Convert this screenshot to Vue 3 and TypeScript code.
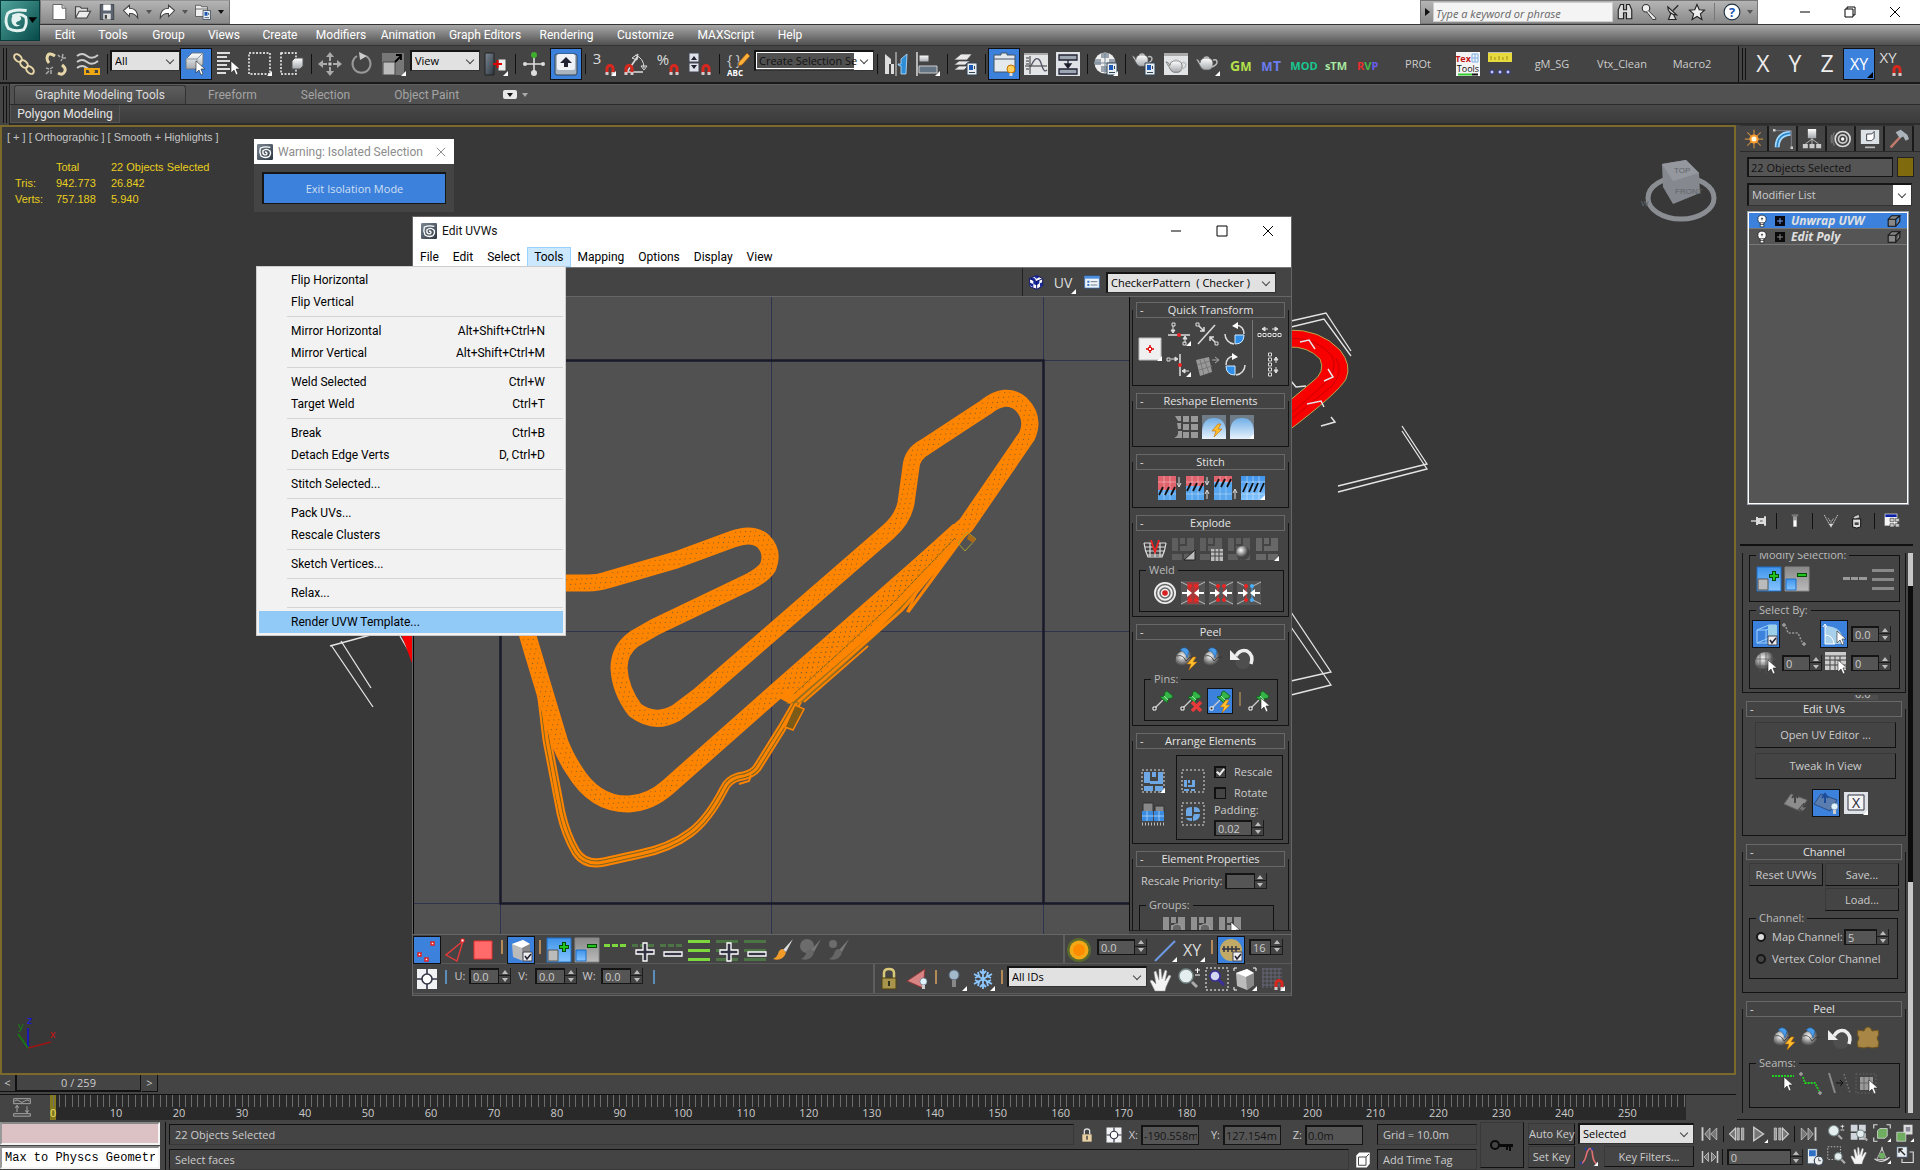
<script setup lang="ts">
import { h, ref } from 'vue'

/* ---------- icon fragments shared by several glyphs ---------- */
const fly = '<path d="M24 19v5h-5z" fill="#fff"/>'
const cursor = (x: number, y: number): string =>
  `<path transform="translate(${x} ${y})" d="M0 0v12l3-3 2 5 2-1-2-5h4z" fill="#fff" stroke="#222" stroke-width=".6"/>`
const magnet = (x: number, y: number): string =>
  `<g transform="translate(${x} ${y})"><path d="M2 11V5.500a3 3 0 0 1 6 0V11" fill="none" stroke="#d8281e" stroke-width="3"/><path d="M.5 9h3v3h-3zM6.500 9h3v3h-3z" fill="#ccc"/></g>`
const sheet = (x: number, y: number): string =>
  `<g transform="translate(${x} ${y})"><path d="M0 0h10v12H0z" fill="#e8edf2" stroke="#345"/><path d="M2 2h4v5H2z" fill="#1b57b4"/><path d="M2 9.500h6M7.500 3v3" stroke="#345"/></g>`
const tick = (x: number, y: number): string =>
  `<path d="M${x} ${y}h9v9h-9z" fill="#eee" stroke="#445"/><path d="M${x + 2} ${y + 4}l2 3 4-5" fill="none" stroke="#223" stroke-width="1.600"/>`
const bolt = (x: number, y: number): string =>
  `<path transform="translate(${x} ${y})" d="M6 0 0 7h4l-2 6 8-8H6l3-5z" fill="#ffbf2e" stroke="#c06a00" stroke-width=".6"/>`
const pot = (x: number, y: number, s: number): string =>
  `<g transform="translate(${x} ${y}) scale(${s})"><path d="M0 3q3 0 4 4 0-4 4-5h5q4 1 4 5 0 6-4 7H8Q5 13 3 8z" fill="url(#g-light)" stroke="#555" stroke-width=".7"/><path d="M17 4q4-1 4 2t-5 5M8 2q2.500-2 5 0" fill="none" stroke="#bbb" stroke-width="1.500"/></g>`
const bulbMini = (x: number, y: number): string =>
  `<g transform="translate(${x} ${y})"><circle cx="3.500" cy="3.500" r="3.500" fill="#dff4ff" stroke="#567" stroke-width=".6"/><path d="M2 7h3v4H2z" fill="#ccc"/></g>`
const pin = '<path d="m4 19 8-8" stroke="#ccc" stroke-width="1.300"/><path d="M2 18h3v3H2z" fill="#222" stroke="#fff"/><path d="m9 8 4-1 1-4 2-1 6 5-1 2-4 1-1 4z" fill="#35b548" stroke="#14651f"/><path d="m13 7 4 4" stroke="#9be8a4"/>'
const ball = '<circle cx="11" cy="14" r="9.500" fill="url(#g-ball)"/><path d="M3 10q6-2 9 5 3-5 8-4" fill="none" stroke="#333" stroke-width=".8"/><path d="M6 4q5-5 9 1l-2 7q-1-6-7-8z" fill="#4a9be8" stroke="#1d5ea8" stroke-width=".6"/>'
const letters = (t: string, x: number, y: number, size: number, fill: string, weight = 400): string =>
  `<text x="${x}" y="${y}" font-family="Open Sans, sans-serif" font-size="${size}" font-weight="${weight}" text-anchor="middle" fill="${fill}">${t}</text>`
const blocks = (c: string): string =>
  `<path d="M1 1h6v13H1zM9 1h5v6H9zM16 1h7v13H9V9h7zM1 17h10v6H1zM13 17h10v6H13z" fill="${c}"/>`
const swirl = '<rect width="24" height="24" rx="2" fill="url(#g-steel)"/><path d="M20 5Q12 3 5 6 3 12 6 18q6 4 12 1 4-5 1-9-5-4-10 0-1 5 2 6 4 1 4-2 0-2-3-2" fill="none" stroke="#fff" stroke-width="2"/>'
const cubeShape = '<path d="M3 6 14 2l7 4v12l-7 5L4 19z" fill="#bbb"/><path d="M3 6 14 2l7 4-8 4z" fill="#fff"/><path d="m13 10 8-4v12l-7 5z" fill="#888"/>'
const weldArms = '<path d="M0 0h24v24H0z" fill="#555"/><path d="m0 1 8 4M24 1l-8 4M0 23l8-4M24 23l-8-4" stroke="#bbb"/>'
const weldArrows = '<path d="M1 12h6M23 12h-6" stroke="#fff" stroke-width="2"/><path d="m6 8 5 4-5 4zM18 8l-5 4 5 4z" fill="#fff"/>'
const nodes = (c: string, x: number): string => `<path d="M${x} 5v14" stroke="${c}"/><circle cx="${x}" cy="5" r="2" fill="${c}"/><circle cx="${x}" cy="19" r="2" fill="${c}"/>`
const stitchArt = (split: number): string =>
  `<path d="M1 0h18v${split}H1z" fill="#e0626c"/><path d="M1 ${split}h18V24H1z" fill="#58a6ee"/><path d="M7 0v24M13 0v24M1 6h18M1 18h18" stroke="#fff" stroke-opacity=".35"/><path d="m2 ${split + 5} 4-8M8 ${split + 5}l4-8M14 ${split + 5}l4-8" stroke="#111" stroke-width="1.800"/>`
const bars = (c: string): string => `<path d="M1 2h22v3H1zM1 11h22v3H1zM1 20h22v3H1z" fill="${c}"/>`
const dashes = (c: string): string => `<path d="M1 6h6v3H1zM9 6h6v3H9zM17 6h6v3h-6z" fill="${c}"/>`
const plusOut = '<path d="M12 5h4v7h7v4h-7v7h-4v-7H5v-4h7z" fill="#334" stroke="#fff" stroke-width="1.300"/>'
const minusOut = '<path d="M5 14h18v4H5z" fill="#334" stroke="#fff" stroke-width="1.300"/>'
const brushArt = (h1: string, h2: string): string => `<path d="M22 1 12 12l3 2z" fill="${h1}"/><path d="M12 11q-4 0-5 5-1 3-5 5 9 3 13-6z" fill="${h2}"/>`
const chainRing = (x: number, y: number): string => `<ellipse cx="${x}" cy="${y}" rx="3" ry="4.500" transform="rotate(-45 ${x} ${y})" fill="none" stroke="#e6d6a8" stroke-width="2"/>`
const lens = (x: number, y: number, r: number): string =>
  `<path d="m${x + r - 1} ${y + r - 1} 5 5" stroke="#aaa" stroke-width="3"/><circle cx="${x}" cy="${y}" r="${r}" fill="#e4eeee" stroke="#788" stroke-width="1.400"/>`
const hand = '<path d="M6 24 1 14l2-1 4 4L5 5l2-1 3 9V2h2l1 10 3-9 2 1-2 10 4-6 2 1-5 11-1 4z" fill="#f4f4f4" stroke="#999" stroke-width=".5"/>'
const targetGrid = '<path d="M2 2h20v20H2z" fill="#f0f2f4"/><path d="M12 2v20M2 12h20" stroke="#334" stroke-width="1.600"/><circle cx="12" cy="12" r="5" fill="#fff" stroke="#334" stroke-width="1.600"/>'
const selPlus = '<path d="M0 0h24v24H0z" fill="url(#g-blue)" stroke="#1f6fc4"/><path d="M1 12h10v11H1z" fill="#bbb" stroke="#555"/><path d="M17 4v10M12 9h10" stroke="#054a05" stroke-width="4"/><path d="M17 5v8M13 9h8" stroke="#1fc41f" stroke-width="2"/>'
const selMinus = '<path d="M0 0h24v24H0z" fill="url(#g-gray)" stroke="#888"/><path d="M1 12h10v11H1z" fill="url(#g-blue)" stroke="#1f6fc4"/><path d="M12 8h10" stroke="#054a05" stroke-width="4"/><path d="M13 8h8" stroke="#1fc41f" stroke-width="2"/>'

const icons: Record<string, string> = {
  swirl,
  newdoc: '<path d="M4 2h12l5 5v15H4z" fill="#fff" stroke="#444"/><path d="M16 2v5h5" fill="#ccc" stroke="#444"/>',
  open: '<path d="M2 20V5h6l2 2h8v4" fill="#ddd" stroke="#444" stroke-width="1.500"/><path d="m2 20 5-9h15l-5 9z" fill="#eee" stroke="#444" stroke-width="1.500"/>',
  save: '<path d="M3 2h18v20H3z" fill="#5b6470" stroke="#333"/><path d="M7 2h10v8H7z" fill="#fff"/><path d="M7 14h10v8H7z" fill="#ddd"/><path d="M9 16h3v5H9z" fill="#444"/>',
  undo: '<path d="m2 10 8-7v4q11 0 11 13-4-7-11-6v4z" fill="#fff" stroke="#444" stroke-width="1.400"/>',
  redo: '<path d="m22 10-8-7v4Q3 7 3 20q4-7 11-6v4z" fill="#fff" stroke="#444" stroke-width="1.400"/>',
  project: '<path d="M2 3h7l1 2h8v13H2z" fill="#eee" stroke="#444"/><path d="M2 8h16" stroke="#444"/>' + sheet(12, 10),
  link: chainRing(6, 6) + chainRing(12, 12) + chainRing(18, 18),
  unlink: '<path d="M11 4Q4-1 3 6q0 3 2 5M14 21q5 3 7-2 1-3-3-6" fill="none" stroke="#e6d6a8" stroke-width="3"/><path d="M14 3l2 2m3-3-1 4m4 0h-4m-1 3 1-2M2 16l3 1m2 5 0-4m2-3-3 2m-4 5 3-3" stroke="#aaa" stroke-width="1.500"/>',
  wave: '<path d="M1 4q5-4 10 0t11-1M1 10q5-4 10 0t11-1M1 16q5-4 10 0t4 0" fill="none" stroke="#ccc" stroke-width="2"/><path d="M9 17h6v5H9zM17 17h6v5h-6z" fill="none" stroke="#f0a812" stroke-width="2"/><path d="M13 19.500h6" stroke="#f0a812" stroke-width="2"/>',
  selobj: '<path d="m2 7 6-6h11v11l-4 5H2z" fill="url(#g-light)" stroke="#678"/><path d="M2 7h11v10M13 7l6-6" fill="none" stroke="#89a"/>' + cursor(12, 9),
  byname: '<path d="M1 1h13M1 5h10M1 9h13M1 13h10M1 17h13M1 21h9" stroke="#ddd" stroke-width="1.800"/>' + cursor(15, 9),
  rect: '<path d="M1 1h21v21H1z" fill="none" stroke="#fff" stroke-width="1.400" stroke-dasharray="2 1.500"/>' + fly,
  cross: '<path d="M1 1h15v21H1z" fill="none" stroke="#fff" stroke-width="1.400" stroke-dasharray="2 1.500"/><path d="m12 9 3-3h8v8l-3 3h-8z" fill="url(#g-light)" stroke="#555"/>',
  move: '<path d="M12 0l4 5H8zM12 24l4-5H8zM0 12l5-4v8zM24 12l-5-4v8z" fill="#aaa"/><path d="M12 5v4M12 15v4M5 12h4M15 12h4" stroke="#aaa" stroke-width="2"/><path d="M10.500 10.500h3v3h-3z" fill="#ccc"/>',
  rotate: '<path d="M16 4a9 9 0 1 1-9 0" fill="none" stroke="#999" stroke-width="2"/><path d="m9 0 8 4-7 4z" fill="#ccc"/>',
  scale: '<path d="M0 1h22v22H0z" fill="#777"/><path d="M1 10h12v13H1z" fill="#bbb" stroke="#444"/><path d="m13 10 6-6m0 4V3h-5" fill="none" stroke="#000" stroke-width="1.800"/>' + fly,
  pivot: '<path d="M1 1h9v22H1z" fill="url(#g-steel)" stroke="#222"/><path d="M14 7h8v12h-8z" fill="#eee" stroke="#444"/><path d="M9 12h9M13.500 8v8" stroke="#d00" stroke-width="2"/>' + fly,
  manip: '<path d="M12 3v18M3 12h18" stroke="#ddd" stroke-width="1.600"/><circle cx="12" cy="3" r="3" fill="#3fae2d"/><circle cx="3" cy="12" r="2" fill="#ddd"/><circle cx="21" cy="12" r="2" fill="#ddd"/><circle cx="12" cy="21" r="3" fill="#ddd"/>',
  keyb: '<rect x="1" y="2" width="22" height="21" rx="2" fill="#aab4c0" stroke="#345"/><rect x="3" y="2" width="18" height="16" rx="2" fill="#eef2f6"/><path d="M12 5l6 6h-4v4h-4v-4H6z" fill="#223"/>',
  snap3: letters('3', 5, 12, 15, '#ddd') + magnet(13, 11) + fly,
  snapA: '<path d="M1 20h18M3 20 14 4" stroke="#ddd" stroke-width="1.600"/><path d="M11 3q9 3 9 13m0 2-3-4h6zM8 6l6-4-1 6z" fill="none" stroke="#ddd"/>' + magnet(0, 11),
  snapP: letters('%', 7, 13, 15, '#ddd') + magnet(13, 11),
  snapS: '<path d="M1 1h10v9H1zM1 11h10v9H1z" fill="#dde2e8" stroke="#445"/><path d="m3 8 3-4 3 4zM3 13l3 4 3-4z" fill="#223"/>' + magnet(13, 11),
  named: letters('{ }', 8, 13, 14, '#ccc') + letters('ABC', 9, 24, 8, '#fff', 700) + '<path d="m12 14 1-4 8-9 3 3-8 9z" fill="#ffb03a" stroke="#854a10" stroke-width=".7"/>',
  mirror: '<path d="M1 2l6 5v5h3v10H7V12H5v10H1z" fill="#ddd"/><path d="M12 0v24" stroke="#ddd"/><path d="M23 2l-6 5v5h-3q0 2 3 2v8h5z" fill="#2e8fd8" stroke="#bfe2ff" stroke-width=".8"/>',
  align: '<path d="M1 0v24" stroke="#ddd" stroke-width="1.500"/><path d="M3 3h10v7H3z" fill="url(#g-light)" stroke="#444"/><path d="M3 14h18v7H3z" fill="#667585" stroke="#ccc"/>' + fly,
  layers: '<path d="m0 8 7-6h11l-5 6zM0 13l5-4h11l-5 4zM0 18l5-4h9l-4 4z" fill="#e8e8e8" stroke="#444" stroke-width=".7"/>' + sheet(13, 11),
  ribbon: '<path d="M2 3h7V1h6v2h8v17H2z" fill="#e4e9ee" stroke="#456"/><path d="M2 7h21" stroke="#456"/><circle cx="19" cy="17" r="4" fill="#ffcf5a" stroke="#c07000"/><path d="M17.500 21h3v3h-3z" fill="#ddd"/>',
  curve: '<path d="M0 1h24v22H0z" fill="#e2e4e6"/><path d="M0 1h24v2H0z" fill="#aaa"/><path d="M6 4v18M1 14h22" stroke="#333"/><path d="M7 14q4-9 7-7 2 0 4 7t5 4" fill="none" stroke="#556" stroke-width="1.300"/><path d="M2 6h3M2 9h3M2 12h3M2 17h3" stroke="#333"/>',
  schem: '<path d="M0 0h24v24H0z" fill="#dfe3e8"/><path d="M3 3h18v5H3zM3 17h18v5H3z" fill="#9ca6b2" stroke="#223" stroke-width="1.300"/><path d="M12 8v6m-3-2 3 4 3-4z" stroke="#223" stroke-width="1.300"/>',
  mat: '<circle cx="11" cy="11" r="10.500" fill="#eee"/><path d="M7 1h8v5H7zM1 7h6v6H1zM15 7h6v6h-6zM7 14h7v6H7z" fill="#9aa4ae"/><path d="M11 1v20M1 11h20" stroke="#789"/>' + sheet(13, 11) + fly,
  rsetup: pot(0, 1, 0.95) + sheet(13, 11),
  rframe: '<path d="M0 1h24v22H0z" fill="#e2e4e6"/><path d="M0 1h24v3H0z" fill="#aaa"/>' + pot(2, 7, 0.95),
  render: pot(0, 4, 1) + fly,
  gm: letters('G', 7, 19, 14, '#b4e04a', 700) + letters('M', 18, 19, 12, '#b4e04a', 700),
  mt: letters('M', 7, 19, 12, '#6a7cf0', 700) + letters('T', 17, 19, 14, '#6a7cf0', 700),
  mod: letters('MOD', 12, 18, 11, '#18c890', 700), stm: letters('sTM', 12, 18, 11, '#a8e8a0', 700),
  rvp: '<text x="1" y="18" font-family="Open Sans, sans-serif" font-size="11" font-weight="700"><tspan fill="#e83030">R</tspan><tspan fill="#48b848">V</tspan><tspan fill="#6a5cf0">P</tspan></text>',
  tex: '<path d="M0 0h24v24H0z" fill="#f4f4f4"/>' + letters('Tex', 7, 10, 9, '#c01818', 700) + letters('Tools', 12, 20, 9, '#111') + '<path d="M16 2h6v8h-6zM16 6h6M19 2v8" fill="none" stroke="#7fb0e8"/><path d="M2 21.500h14v2H2z" fill="#3c3"/><path d="M16 21.500h6v2h-6z" fill="#111"/>',
  ruler: '<path d="M0 0h24v10H0z" fill="#e6da3c"/><path d="M0 0h24v1H0z" fill="#bbb"/><path d="M3 4v4M7 5v3M11 4v4M15 5v3M19 4v4" stroke="#a08a18"/><circle cx="4" cy="20" r="2" fill="#ccf" stroke="#339"/><circle cx="12" cy="20" r="2" fill="#ccf" stroke="#339"/><circle cx="20" cy="20" r="2" fill="#ccf" stroke="#339"/>',
  axX: letters('X', 12, 20, 23, '#eee'), axY: letters('Y', 12, 20, 23, '#eee'), axZ: letters('Z', 12, 20, 23, '#eee'),
  axXY: letters('XY', 12, 18, 16, '#fff') + '<path d="M26 20v6h-6z" fill="#000"/>',
  snXY: letters('XY', 9, 11, 15, '#ddd') + magnet(13, 12),
  bino: '<path d="M3 9 6 2h4v7h4V2h4l3 7v12h-7v-8h-4v8H3z" fill="#ddd" stroke="#222" stroke-width="1.500"/>',
  keyw: '<circle cx="8" cy="7" r="5" fill="#eee" stroke="#333" stroke-width="1.500"/><path d="m11 10 10 10v2h-4L9 12" fill="#eee" stroke="#333" stroke-width="1.300"/>',
  dish: '<path d="M5 5q0 10 12 11zM9 14l-3 8h10l-3-6M12 10l7-7" fill="#ddd" stroke="#222" stroke-width="1.500"/>',
  star: '<path d="m12 2 3 7 7 .5-5.500 5 2 7.500-6.500-4-6.500 4 2-7.500L2 9.500 9 9z" fill="#eee" stroke="#222" stroke-width="1.500"/>',
  help: '<circle cx="12" cy="12" r="10.500" fill="#fff" stroke="#234" stroke-width="1.500"/>' + letters('?', 12, 18, 17, '#1b57b4', 700),
  /* command panel tabs */
  create: '<path d="M12 1v22M1 12h22M4 4l16 16M20 4 4 20" stroke="#f3a53c" stroke-opacity=".7" stroke-width="1.500"/><circle cx="12" cy="12" r="5.500" fill="#ff9a2e"/><circle cx="12" cy="12" r="3" fill="#fffbe0"/>',
  modify: '<path d="M5 22Q5 6 21 5" fill="none" stroke="#a4dcff" stroke-width="6"/><path d="M5 22Q5 6 21 5" fill="none" stroke="#2f86c8" stroke-width="2"/><path d="M2 2h20v20" fill="none" stroke="#889"/><path d="M0 0h3v3H0zM21 21h3v3h-3z" fill="#ccc"/>',
  hier: '<path d="M7 0h10v11H7z" fill="url(#g-light)"/><path d="M12 11v7M12 12l-8 6M12 12l8 6" stroke="#ccc"/><path d="M1 18h6v5H1zM9 18h6v5H9zM17 18h6v5h-6z" fill="#ccc"/>',
  motion: '<circle cx="14" cy="12" r="9" fill="none" stroke="#ddd" stroke-width="2"/><circle cx="14" cy="12" r="5" fill="none" stroke="#ccc" stroke-width="2"/><circle cx="14" cy="12" r="2" fill="#fff"/><path d="M4 4q-4 8 0 16M1 7q-2 5 0 10" fill="none" stroke="#777" stroke-width="1.500"/>',
  display: '<path d="M1 1h22v17H1z" fill="#dde2e6"/><path d="M8 6h6l3-3v8l-3 3H8z" fill="#fff" stroke="#223"/><path d="M6 21h12v2H6z" fill="#bbb"/>',
  util: '<path d="m2 22 12-13" stroke="#c27a6c" stroke-width="3"/><path d="m8 4 6-3 8 6 2 5-4 2-3-5-4 2z" fill="#aab4ba"/>',
  bulb: '<circle cx="12" cy="9" r="7" fill="#fff" stroke="#000"/><path d="M9 15h6v7H9z" fill="#fff" stroke="#000"/><path d="M12 6v5M10 8h4M9 18h6" stroke="#000"/>',
  plusbox: '<path d="M2 2h20v20H2z" fill="#0a0a14"/><path d="M12 6v12M6 12h12" stroke="#6c9ce6" stroke-width="2"/>',
  plusdim: '<path d="M2 2h20v20H2z" fill="#0a0a0a"/><path d="M12 6v12M6 12h12" stroke="#888" stroke-width="2"/>',
  cubeMini: '<path d="M2 9h13v12H2zM2 9l6-6h14l-7 6M22 3v10l-7 8" fill="#888" stroke="#111" stroke-width="1.800"/>',
  pinstack: '<path d="M0 12h9" stroke="#ddd" stroke-width="2"/><path d="M9 6v12M12 9h7v6h-7zM21 5v14" stroke="#ddd" stroke-width="3" fill="#999"/>',
  tube: '<path d="M7 2h10v3H7z" fill="#777"/><path d="M9 5h6v16H9z" fill="#999"/><path d="M10 11h4v9h-4z" fill="#fff"/>',
  unique: '<path d="m2 3 8 15M22 3l-8 15M8 8l4 6 4-6" fill="none" stroke="#ccc" stroke-width="1.500" stroke-dasharray="2 1"/><path d="m9 16 3 6 3-6z" fill="#ddd"/>',
  bin: '<path d="M7 9h12v12q-6 3-12 0z" fill="#ddd" stroke="#111" stroke-width="1.500"/><path d="m7 6 9-4 2 5-8 2z" fill="#ccc" stroke="#111"/><path d="M10 14h6v4h-6z" fill="#444"/>',
  config: '<path d="M1 1h19v18H1z" fill="#f4f4f4"/><path d="M2 2h17v4H2z" fill="#0a1ea8"/><path d="M9 8h6v5H9zM17 8h6v5h-6zM9 16h6v5H9zM17 16h6v5h-6z" fill="#ccc" stroke="#444"/>',
  /* unwrap tools */
  checker: '<path d="M2 7 13 2l9 5v11l-9 5L3 19z" fill="#fff"/><path d="M2 7l5-2 5 3-4 2zM13 2l5 2-5 3-4-3zM13 11l4-2v5l-4 3zM18 14l4-2v5l-4 3zM3 13l5 2v5l-5-3zM8 9l5 2v6l-5-2z" fill="#1a2aa0"/><path d="M2 7 13 2l9 5v11l-9 5L3 19zM13 11v12M2 7l11 4 9-4" fill="none" stroke="#10186a" stroke-width="1.500"/>',
  listw: '<path d="M1 3h22v18H1z" fill="#eef4fa" stroke="#2f6fc4"/><path d="M1 3h22v4H1z" fill="#4c8ede"/><path d="M5 10h3v3H5zM5 15h3v3H5z" fill="#2f6fc4"/><path d="M10 11.500h10M10 16.500h10" stroke="#345"/>',
  uvt: letters('UV', 11, 18, 14, '#ddd') + fly,
  target: '<path d="M1 1h22v22H1z" fill="#f0f0f0" stroke="#bbb"/><path d="M12 8v8M8 12h8" stroke="#d00" stroke-width="1.500"/><path d="M10.500 10.500h3v3h-3z" fill="#fff" stroke="#d00"/>' + fly,
  alH: '<path d="M1 13h22" stroke="#ddd" stroke-width="1.500"/><path d="M6 4v6m-2-2 2 3 2-3zM18 21v-6m-2 2 2-3 2 3z" stroke="#ddd" fill="#ddd"/><path d="M5 1h3v3H5zM16 20h3v3h-3z" fill="none" stroke="#ddd"/><circle cx="12" cy="13" r="2" fill="#e22"/>' + fly,
  alV: '<path d="M13 1v22" stroke="#ddd" stroke-width="1.500"/><path d="M4 6h6m-2-2 3 2-3 2zM22 18h-6m2-2-3 2 3 2z" stroke="#ddd" fill="#ddd"/><path d="M0 5h3v3H0z" fill="none" stroke="#ddd"/><circle cx="13" cy="12" r="2" fill="#e22"/>' + fly,
  alL: '<path d="M3 22 20 3" stroke="#ddd" stroke-width="1.500"/><path d="m4 4 5 5m-4 0h4V5M20 20l-5-5m4 0h-4v4" stroke="#ddd" fill="none" stroke-width="1.500"/><path d="M1 1h3v3H1zM20 20h3v3h-3z" fill="none" stroke="#ddd"/>',
  grayq: '<path d="M1 7 14 4l3 15-12 4z" fill="#999"/><path d="M5 7l4 15M9 6l5 14M2 12l13-4M4 17l13-4" stroke="#777"/><path d="M17 7h6m-3-3 4 3-4 3" stroke="#aaa" fill="none"/>',
  rotR: '<path d="M12 13h9q0 9-9 9z" fill="#2f8fe8" stroke="#cfe8ff"/><path d="M2 12a10 10 0 0 0 9 10" fill="none" stroke="#ddd" stroke-width="1.500"/><path d="M21 12q0-8-8-9" fill="none" stroke="#ddd" stroke-width="1.500"/><path d="m9 4 6-4v7z" fill="#fff"/>',
  rotL: '<path d="M3 13h9v9q-9 0-9-9z" fill="#2f8fe8" stroke="#cfe8ff"/><path d="M22 12a10 10 0 0 1-9 10" fill="none" stroke="#ddd" stroke-width="1.500"/><path d="M3 12q0-8 8-9" fill="none" stroke="#ddd" stroke-width="1.500"/><path d="m15 4-6-4v7z" fill="#fff"/>',
  spH: '<path d="M4 7h6M20 7h-6M4 7l3-2v4zM20 7l-3-2v4z" stroke="#ddd" fill="#ddd"/><path d="M0 13h24" stroke="#666"/><path d="M0 11.500h3v3H0zM5 11.500h3v3H5zM10 11.500h3v3h-3zM15 11.500h3v3h-3zM20 11.500h3v3h-3z" fill="#333" stroke="#ddd"/>',
  spV: '<path d="M18 4v6M18 20v-6M18 4l-2 3h4zM18 20l-2-3h4z" stroke="#ddd" fill="#ddd"/><path d="M10.500 0h3v3h-3zM10.500 5h3v3h-3zM10.500 10h3v3h-3zM10.500 15h3v3h-3zM10.500 20h3v3h-3z" fill="#333" stroke="#ddd"/>',
  straight: '<path d="M1 1h6v5H4zM9 1h6v6H9zM17 1h7v6h-7zM3 8h4v6H4zM9 9h6v6H9zM17 9h7v6h-7zM0 23q5-2 4-7h4v7zM9 17h6v6H9zM17 17h7v6h-7z" fill="#999"/>',
  relaxb: '<path d="M0 0h24v24H0z" fill="#6f7c88"/><path d="M0 16Q1 3 12 3t12 13v8H0z" fill="url(#g-sky)"/>' + bolt(10, 9),
  relax: '<path d="M0 0h24v24H0z" fill="#6f7c88"/><path d="M0 16Q1 3 12 3t12 13v8H0z" fill="url(#g-sky)"/>' + fly,
  st1: stitchArt(14) + '<path d="M22 1v9m-2-3 2 4 2-4" fill="none" stroke="#ddd"/>',
  st2: stitchArt(10) + '<path d="M22 1v7m-2-3 2 4 2-4M22 23v-8m-2 3 2-4 2 4" fill="none" stroke="#ddd"/>',
  st3: stitchArt(6) + '<path d="M22 23v-9m-2 3 2-4 2 4" fill="none" stroke="#ddd"/>',
  st4: '<path d="M0 0h24v24H0z" fill="url(#g-blue)"/><path d="M6 0v24M12 0v24M18 0v24M0 6h24M0 18h24" stroke="#fff" stroke-opacity=".4"/><path d="m2 16 4-9M8 16l4-9M13 16l4-9M19 16l4-9" stroke="#111" stroke-width="1.800"/>' + fly,
  expBrk: '<path d="M1 6q1 8 4 14h14q3-6 4-14M1 6h22M2 10h20M3 14h18M4 18h16M7 6v14M17 6v14M12 12v8" fill="none" stroke="#ddd" stroke-width="1.200"/><path d="m8 3 4 12 4-12" fill="#444" stroke="#e22" stroke-width="1.800"/>',
  exp1: blocks('#5e5e5e') + '<path d="M13 23h11V13z" fill="#bbb" stroke="#222"/>',
  exp2: blocks('#5e5e5e') + '<path d="M12 12h12v12H12z" fill="#bbb"/><path d="M12 15h12M12 19h12M16 12v12M20 12v12" stroke="#444"/>',
  exp3: blocks('#5e5e5e') + '<circle cx="16" cy="16" r="7" fill="url(#g-ball)"/>',
  exp4: blocks('#686868') + fly,
  weldT: '<circle cx="12" cy="12" r="11" fill="#eee"/><circle cx="12" cy="12" r="8.500" fill="none" stroke="#666" stroke-width="1.500"/><circle cx="12" cy="12" r="5" fill="none" stroke="#666" stroke-width="1.500"/><circle cx="12" cy="12" r="2.800" fill="#d81e1e"/>',
  weld1: weldArms + '<path d="M6 1h12v22H6z" fill="#e22" fill-opacity=".5"/>' + nodes('#e22', 9) + nodes('#e22', 15) + weldArrows,
  weld2: weldArms + nodes('#e22', 9) + nodes('#e22', 15) + weldArrows,
  weld3: weldArms + nodes('#e22', 9) + nodes('#4ab0ff', 15) + weldArrows,
  peel1: ball + bolt(13, 11), peel2: ball,
  peel3: '<circle cx="13" cy="15" r="8" fill="#4e4e4e"/><path d="M6 10Q10 3 17 5q7 4 4 13" fill="none" stroke="#eee" stroke-width="3.500"/><path d="M0 4v10h10z" fill="#eee"/>',
  pelt: '<path d="M2 4 8 5q1-4 4-4t4 4l6-1q2 4-1 8 3 5 1 9l-6 1q-4-2-8 0l-6-1q-2-4 1-9Q0 8 2 4z" fill="#a88646" stroke="#70541e"/>',
  pin1: pin, pin2: pin + '<path d="m13 13 9 9m0-9-9 9" stroke="#e83a3a" stroke-width="3.500"/>',
  pin3: pin + bolt(12, 11), pin4: pin + cursor(14, 9),
  pack1: '<path d="M1 1h22v22H1z" fill="none" stroke="#ddd" stroke-dasharray="2 2"/><path d="M3 3h6v11H3zM11 3h4v5h-4zM17 3h5v12H9v-3h8zM3 17h9v5H3zM14 17h8v5h-8z" fill="#6ea8e4"/>' + fly,
  pack2: '<path d="M2 1h10v9H2zM14 4h9v7h-9z" fill="#888" stroke="#333"/><path d="M1 9h11v10H1zM13 9h10v10H13z" fill="#3a8be0"/><path d="M1 14h22M6 9v10M18 9v10" stroke="#bfe0ff" stroke-width=".7"/><path d="M1 22h22" stroke="#bbb" stroke-width="3" stroke-dasharray="1 2"/>',
  pack3: '<path d="M1 1h22v22H1z" fill="none" stroke="#ddd" stroke-dasharray="2 2"/><path d="M3 11h3v7H3zM7 11h2v3H7zM11 11h3v7H7v-2h4zM3 20h5v2H3zM10 20h4v2h-4z" fill="#6ea8e4"/>',
  pack4: '<path d="M1 1h22v22H1z" fill="none" stroke="#ddd" stroke-dasharray="2 2"/><path d="M5 8q0-3 6-3v9H5zM13 5q6 0 6 5h-6zM13 12h6q0 6-7 7v-4zM5 16h6v3q-5 0-6-3z" fill="#6ea8e4"/>',
  grp: blocks('#909090') + '<circle cx="15" cy="13" r="5" fill="#666" stroke="#aaa"/>', grpSel: blocks('#909090') + cursor(13, 6),
  vert: '<path d="M3 15h3v3H3zM10 20h3v3h-3zM16 4h3v3h-3z" fill="#fff" stroke="#e02020" stroke-width="1.500"/>',
  edge: '<path d="M20 3 3 17l11 6z" fill="none" stroke="#e83a3a" stroke-width="1.400"/><path d="M18 1h3v3h-3z" fill="#fff" stroke="#e22"/>',
  face: '<path d="M3 3h18v18H3z" fill="#ff6b6b" stroke="#e83030"/>',
  cubeChk: cubeShape + tick(14, 14), selPlus, selMinus,
  loop: dashes('#7cd83c'), loopP: dashes('#4d7444') + plusOut, loopM: dashes('#4d7444') + minusOut,
  ring: bars('#7cd83c'), ringP: bars('#4d7444') + plusOut, ringM: bars('#4d7444') + minusOut,
  brush: brushArt('#ddd', '#f09a2a'),
  brushP: '<circle cx="8" cy="8" r="7" fill="#6c6c6c"/>' + brushArt('#777', '#666'),
  brushM: '<circle cx="6" cy="6" r="4" fill="#6c6c6c"/>' + brushArt('#777', '#666'),
  falloff: '<circle cx="12" cy="12" r="12" fill="#5a6a2c"/><circle cx="12" cy="12" r="9.500" fill="#f3a818"/><circle cx="12" cy="12" r="6" fill="#ff8c00"/>',
  line: '<path d="M2 23 22 3" stroke="#6e96e0" stroke-width="2.200"/>' + fly,
  xy: letters('XY', 11, 18, 16, '#ddd') + fly,
  fallEdge: '<circle cx="12" cy="12" r="11" fill="#c0aa66"/><path d="M3 11h18M5 8v6M9 8v6M13 8v6M17 8v6" stroke="#334" stroke-width="1.500"/>' + tick(14, 14),
  abs: targetGrid,
  lock: '<path d="M7 11V6q0-4 5-4t5 4v5" fill="none" stroke="#d8c878" stroke-width="2.500"/><path d="M5 11h14v11H5z" fill="#a8944a" stroke="#4c4010"/><path d="M11 14h2v5h-2z" fill="#332"/>',
  hideF: '<path d="M2 14 20 2l-2 19z" fill="#d88484" stroke="#8c3838"/>' + bulbMini(15, 11),
  bulb2: '<circle cx="11" cy="8" r="5" fill="#a4b8cc" stroke="#567"/><path d="M9 13h4v7H9z" fill="#888"/>' + fly,
  snow: '<path d="M12 2v20M3 7l18 10M21 7 3 17M9 4l3 3 3-3M9 20l3-3 3 3M4 11l4-2-1-4M20 11l-4-2 1-4M4 13l4 2-1 4M20 13l-4 2 1 4" stroke="#8cc8ff" stroke-width="1.800" fill="none"/>' + fly,
  hand, zoom: lens(9, 9, 7) + '<path d="M18 3h5M20.500 1v5M18 8h5" stroke="#fff"/>',
  zoomR: '<path d="M1 1h22v22H1z" fill="none" stroke="#fff" stroke-dasharray="2 2"/><path d="m13 12 6 6" stroke="#3a2f9c" stroke-width="3"/><circle cx="10" cy="9" r="5" fill="#d4d8ee" stroke="#3a2f9c" stroke-width="1.500"/>',
  fit: '<path d="M1 4V1h3M20 1h3v3M1 20v3h3" stroke="#fff" fill="none"/>' + cubeShape + fly,
  gridSnap: '<path d="M1 2h20M1 6h20M1 10h20M1 14h20M1 18h20M2 1v20M6 1v20M10 1v20M14 1v20M18 1v20" stroke="#667"/>' + magnet(13, 11) + fly,
  dashG: '<path d="M0 10h7v3H0zM8 10h7v3H8zM16 10h8v3h-8z" fill="#999"/>',
  barsG: bars('#888'),
  cubeW: '<path d="M3 8 15 3v13L3 21zM15 3h7v14h-7M3 21h12l7-4M3 8h9l10-4M12 8v13" fill="none" stroke="#9cd0ff"/><path d="M14 3h9v14h-9z" fill="#9ccfe8"/>' + tick(14, 14),
  dotL: '<path d="M1 2h2v2H1zM21 21h2v2h-2z" fill="#000" stroke="#ccc"/><path d="M4 5l2 6h10l4 9" fill="none" stroke="#999" stroke-width="1.500" stroke-dasharray="2 1.500"/>',
  arc: '<path d="M3 22V4Q20 4 22 20v2z" fill="#a8d0ea"/><path d="M3 3v19h10M3 13q8 0 9 9M1 5l2-3 2 3" fill="none" stroke="#fff"/>' + cursor(15, 9),
  sphere: '<circle cx="11" cy="12" r="11" fill="url(#g-ball)"/><path d="M5 3v18M11 1v22M17 3v18M1 8h20M1 15h20" stroke="#555" stroke-width=".7"/>' + cursor(13, 9),
  grid: '<path d="M1 1h21v18H1z" fill="#ccc"/><path d="M1 5h21M1 9h21M1 14h21M6 5v14M11 5v14M16 5v14" stroke="#444"/>' + cursor(14, 9),
  plane1: '<path d="M7 3 23 9l-7 11L0 13z" fill="#8c8c8c" stroke="#666"/><path d="M11 12V4m-3 3 3-4 3 4" stroke="#444" fill="none" stroke-width="2"/><path d="m20 12-6 7h4l-3 5 8-8h-4z" fill="#777" stroke="#444"/>',
  plane2: '<path d="M7 3 23 9l-7 11L0 13z" fill="#5a7cae" stroke="#2c4c80"/><path d="M11 12V4m-3 3 3-4 3 4" stroke="#1c4c98" fill="none" stroke-width="2"/>' + bulbMini(17, 12),
  xbox: '<path d="M0 1h24v22H0z" fill="#dfe3e8"/><path d="M4 4h16v15H4z" fill="#f4f4f4" stroke="#334"/>' + letters('X', 12, 17, 14, '#223') + fly,
  seam1: '<path d="M1 4h22" stroke="#1fd01f" stroke-width="2" stroke-dasharray="2 1"/>' + cursor(13, 5),
  seam2: '<path d="M1 1h2v2H1zM20 20h2v2h-2z" fill="#000" stroke="#ccc"/><path d="M4 5l2 6h10l4 8" fill="none" stroke="#1fd01f" stroke-width="1.800" stroke-dasharray="2 1"/>',
  seam3: '<path d="m2 1 6 20" stroke="#888" stroke-width="2"/><path d="M9 11h7m-3-3 3 3-3 3" fill="none" stroke="#111"/><path d="m17 2 6 19" stroke="#777" stroke-width="1.500" stroke-dasharray="1.500 2"/>',
  seam4: '<path d="M1 2h20v19H1z" fill="none" stroke="#666" stroke-dasharray="1.500 2"/><path d="M5 5h13v13H5z" fill="#999"/><path d="M9 5v13M14 5v13M5 11h13" stroke="#666"/>' + cursor(14, 8),
  /* track bar and status */
  track: '<path d="M2 2h20v6H2zM2 20h20v3H2z" fill="none" stroke="#bbb"/><path d="M3 5q3-3 6 0t6 0 6 0M6 18v-7m-2 2 2-3 2 3M18 11v7m-2-2 2 3 2-3" fill="none" stroke="#bbb"/>',
  lockS: '<path d="M8 11V6q0-3 4-3t4 3v5" fill="none" stroke="#ddd" stroke-width="2"/><path d="M5 11h14v11H5z" fill="#e8d0a4"/><path d="M12 13v6" stroke="#333" stroke-width="2"/>',
  boxIso: '<path d="M3 6 7 2h14v15l-4 5H3z" fill="#fff"/><path d="M6 8h10v11H6zM16 8l4-4" fill="none" stroke="#444" stroke-width="1.300"/>',
  keyBig: '<circle cx="5" cy="12" r="4" fill="none" stroke="#0a0a0a" stroke-width="2"/><path d="M9 11h14v3h-2v4h-2v-4h-1v3h-2v-3H9z" fill="#0a0a0a"/>',
  curveK: '<path d="M3 21q5 0 8-14 4-8 6 0 1 12 5 14" fill="none" stroke="#e07070" stroke-width="2"/><path d="M8 2h3v3H8zM16 2h3v3h-3zM2 19h3v3H2z" fill="#2c3e9c"/>' + fly,
  first: '<path d="M2 3v18" stroke="#ccc" stroke-width="2.500"/><path d="M12 4v16L5 12zM21 4v16l-8-8z" fill="#777" stroke="#ccc"/>',
  prev: '<path d="M10 4v16l-8-8z" fill="#777" stroke="#ccc" stroke-width="1.500"/><path d="M12 4h3v16h-3zM18 4h3v16h-3z" fill="#999" stroke="#ccc"/>',
  play: '<path d="M5 3v18l13-9z" fill="#777" stroke="#ccc" stroke-width="1.800"/>' + fly,
  next: '<path d="M14 4v16l8-8z" fill="#777" stroke="#ccc" stroke-width="1.500"/><path d="M3 4h3v16H3zM9 4h3v16H9z" fill="#999" stroke="#ccc"/>',
  last: '<path d="M22 3v18" stroke="#ccc" stroke-width="2.500"/><path d="M3 4v16l8-8zM12 4v16l7-8z" fill="#777" stroke="#ccc"/>',
  keymode: '<path d="M2 4v16M22 4v16" stroke="#ccc" stroke-width="2"/><path d="M10 6v12l-6-6zM14 6v12l6-6z" fill="#777" stroke="#ccc"/>',
  timecfg: '<path d="M2 1h13v20H2z" fill="#e8edf2" stroke="#345"/><path d="M4 3h9v8H4z" fill="#2f6fc4"/><circle cx="17" cy="17" r="6" fill="#eee" stroke="#345" stroke-width="1.500"/><path d="M17 13v4h3" stroke="#234" fill="none"/>',
  zAll: '<path d="M1 1h9v9H1zM12 1h9v9h-9zM1 12h9v9H1zM12 12h9v9h-9z" fill="#d0d6dc"/>' + lens(14, 13, 5),
  ext: '<path d="M1 6V1h5M18 1h5v5M1 18v5h5" fill="none" stroke="#ddd" stroke-width="1.500"/><path d="m6 9 3-3h10v10l-3 3H6z" fill="#6fae60" stroke="#ddd"/>' + fly,
  extAll: '<path d="M10 1h12v13H10z" fill="#ddd"/><path d="M1 11h12v12H1z" fill="#6fae60" stroke="#ddd"/><path d="M13 4h6v6h-6z" fill="#889"/>' + fly,
  zReg: '<path d="M1 1h17v17H1z" fill="none" stroke="#ddd" stroke-dasharray="2 2"/>' + lens(15, 14, 5),
  orbit: '<path d="m12 3 6 15H5z" fill="#555" stroke="#ddd"/><circle cx="12" cy="13" r="4" fill="#6fae60"/><path d="M2 17q9 8 20-2M12 1v6" fill="none" stroke="#ddd" stroke-width="1.500"/>' + fly,
  maxv: '<path d="M1 1h14v14H1z" fill="#e8edf2" stroke="#345"/><path d="m4 4 8 8M4 9V4h5" fill="none" stroke="#222" stroke-width="1.800"/><path d="M18 8h5v14H8v-5" fill="none" stroke="#ddd" stroke-width="1.500"/>',
}

const Icon = (p: { n: string }) =>
  h('svg', { class: 'ic', viewBox: '0 0 24 24', 'aria-hidden': 'true', innerHTML: icons[p.n] ?? '' })

const Spin = (p: { v: string; label: string }) =>
  h('span', { class: 'spin' }, [
    h('input', { type: 'text', value: p.v, 'aria-label': p.label }),
    h('span', { class: 'arrows' }, [
      h('button', { class: 'up', type: 'button', 'aria-label': `Increase ${p.label}` }),
      h('button', { class: 'down', type: 'button', 'aria-label': `Decrease ${p.label}` }),
    ]),
  ])

const mainMenu = [
  { t: 'Edit', w: 44 }, { t: 'Tools', w: 52 }, { t: 'Group', w: 59 }, { t: 'Views', w: 52 },
  { t: 'Create', w: 60 }, { t: 'Modifiers', w: 62 }, { t: 'Animation', w: 72 }, { t: 'Graph Editors', w: 82 },
  { t: 'Rendering', w: 81 }, { t: 'Customize', w: 77 }, { t: 'MAXScript', w: 84 }, { t: 'Help', w: 44 },
]
const bar1 = ['link', 'unlink', 'wave']
const bar2 = ['selobj', 'byname', 'rect', 'cross', '|', 'move', 'rotate', 'scale']
const bar3 = ['pivot', '|', 'manip', 'keyb', '|', 'snap3', 'snapA', 'snapP', 'snapS', '|', 'named']
const bar4 = ['|', 'mirror', 'align', '|', 'layers', '|', 'ribbon', 'curve', 'schem', '|', 'mat', '|', 'rsetup', 'rframe', 'render', 'gm', 'mt', 'mod', 'stm', 'rvp']
const axes = ['axX', 'axY', 'axZ', 'axXY', 'snXY']
const pressed = new Set(['selobj', 'keyb', 'ribbon', 'axXY', 'vert', 'cubeChk', 'fallEdge', 'pin3', 'cubeW', 'arc', 'plane2'])

const uvMenu = ['File', 'Edit', 'Select', 'Tools', 'Mapping', 'Options', 'Display', 'View']
const toolsMenu: { t: string; k?: string }[][] = [
  [{ t: 'Flip Horizontal' }, { t: 'Flip Vertical' }],
  [{ t: 'Mirror Horizontal', k: 'Alt+Shift+Ctrl+N' }, { t: 'Mirror Vertical', k: 'Alt+Shift+Ctrl+M' }],
  [{ t: 'Weld Selected', k: 'Ctrl+W' }, { t: 'Target Weld', k: 'Ctrl+T' }],
  [{ t: 'Break', k: 'Ctrl+B' }, { t: 'Detach Edge Verts', k: 'D, Ctrl+D' }],
  [{ t: 'Stitch Selected...' }],
  [{ t: 'Pack UVs...' }, { t: 'Rescale Clusters' }],
  [{ t: 'Sketch Vertices...' }],
  [{ t: 'Relax...' }],
  [{ t: 'Render UVW Template...' }],
]
const uvBar = ['vert', 'edge', 'face', '|', 'cubeChk', '|', 'selPlus', 'selMinus', 'loop', 'loopP', 'loopM', 'ring', 'ringP', 'ringM', 'brush', 'brushP', 'brushM']
const tabs = ['create', 'modify', 'hier', 'motion', 'display', 'util']
const frames = Array.from({ length: 260 }, (_, i) => i)

const rescale = ref(true)
const rotateOn = ref(false)
const channel = ref('map')

const track = 'M566 583H588Q598 583 607 580L676 560 733 539Q752 532 763 541 774 552 768 567 764 574 749 582L655 627 634 639Q619 650 619 668 620 690 635 710 655 725 676 713L700 695 888 532Q903 519 906 503L911 467Q912 454 925 447L986 407Q1006 391 1021 404 1035 418 1027 436L966 525 780 688 668 787Q650 803 629 804 595 805 574 770 567 760 560 743L529 640 518 600'
const pit = 'M800 697 782 728 757 768Q752 775 738 777 728 780 724 789 708 820 690 833 670 848 640 854L604 862Q585 866 576 852 566 835 561 813L547 740 541 690'
</script>

<template>
  <div class="app">
    <svg class="defs" aria-hidden="true">
      <defs>
        <linearGradient id="g-light" x2="0" y2="1"><stop stop-color="#fff" /><stop offset="1" stop-color="#a4a8ac" /></linearGradient>
        <linearGradient id="g-gray" x2="0" y2="1"><stop stop-color="#888" /><stop offset="1" stop-color="#bbb" /></linearGradient>
        <linearGradient id="g-blue" x2="0" y2="1"><stop stop-color="#3f93ea" /><stop offset="1" stop-color="#84c4ff" /></linearGradient>
        <linearGradient id="g-sky" x2="0" y2="1"><stop stop-color="#6eaee6" /><stop offset="1" stop-color="#e8f2fc" /></linearGradient>
        <linearGradient id="g-steel" x2="1" y2="1"><stop stop-color="#7c8894" /><stop offset="1" stop-color="#2c3640" /></linearGradient>
        <linearGradient id="g-teal" x2="1" y2="1"><stop stop-color="#4fa39a" /><stop offset="1" stop-color="#064a4a" /></linearGradient>
        <radialGradient id="g-ball" cx=".35" cy=".3"><stop stop-color="#fff" /><stop offset="1" stop-color="#444" /></radialGradient>
        <pattern id="mesh" width="8" height="6" patternUnits="userSpaceOnUse" patternTransform="rotate(-40)">
          <path d="M1 1h1v1H1zM5 4h1v1H5z" fill="#7a6030" />
        </pattern>
      </defs>
    </svg>

    <header class="titlebar">
      <button class="logo" type="button" aria-label="Application menu">
        <svg viewBox="0 0 40 41" aria-hidden="true">
          <rect width="40" height="41" fill="url(#g-teal)" />
          <path d="M27 10Q13 8 7 13 3 22 8 29q7 4 16 1 4-6 2-13-6-5-14-1" fill="none" stroke="#e4f2f0" stroke-width="3" />
          <path d="M12 16q4-2 8 0 3 3-1 5-4 1-3 3 1 2 5 1-6 4-9-1-2-5 0-8z" fill="#e4f2f0" />
          <path d="M29 17h9l-5 6z" fill="#000" />
        </svg>
      </button>
      <div class="quick">
        <button type="button" aria-label="New"><Icon n="newdoc" /></button>
        <button type="button" aria-label="Open"><Icon n="open" /></button>
        <button type="button" aria-label="Save"><Icon n="save" /></button>
        <button type="button" aria-label="Undo"><Icon n="undo" /></button>
        <i class="caret"></i>
        <button type="button" aria-label="Redo"><Icon n="redo" /></button>
        <i class="caret"></i>
        <button type="button" aria-label="Project folder"><Icon n="project" /></button>
        <i class="caret dark"></i>
      </div>
      <div class="helpbox">
        <span class="play"></span>
        <input type="text" placeholder="Type a keyword or phrase" aria-label="Search help" />
        <button type="button" aria-label="Search"><Icon n="bino" /></button>
        <button type="button" aria-label="Subscription"><Icon n="keyw" /></button>
        <button type="button" aria-label="Communication center"><Icon n="dish" /></button>
        <button type="button" aria-label="Favorites"><Icon n="star" /></button>
        <i class="bar"></i>
        <button type="button" aria-label="Help"><Icon n="help" /></button>
        <i class="caret"></i>
      </div>
      <div class="wincontrols">
        <button type="button" aria-label="Minimize"><svg viewBox="0 0 12 12"><path d="M1 6h10" /></svg></button>
        <button type="button" aria-label="Restore"><svg viewBox="0 0 12 12"><path d="M1 3h8v8H1zM3 3V1h8v8H9" /></svg></button>
        <button type="button" aria-label="Close"><svg viewBox="0 0 12 12"><path d="m1 1 10 10M11 1 1 11" /></svg></button>
      </div>
    </header>

    <nav class="menubar">
      <button v-for="m in mainMenu" :key="m.t" type="button" :style="{ width: m.w + 'px' }">{{ m.t }}</button>
    </nav>

    <div class="toolrow">
      <div class="toolbar">
        <i class="grip"></i>
        <button v-for="n in bar1" :key="n" class="tool" type="button" :aria-label="n"><Icon :n="n" /></button>
        <i class="sep"></i>
        <span class="drop w70"><select aria-label="Selection filter"><option>All</option></select></span>
        <template v-for="(n, i) in bar2" :key="i">
          <i v-if="n === '|'" class="sep"></i>
          <button v-else class="tool" :class="{ on: pressed.has(n) }" type="button" :aria-label="n"><Icon :n="n" /></button>
        </template>
        <span class="drop w70"><select aria-label="Reference coordinate system"><option>View</option></select></span>
        <template v-for="(n, i) in bar3" :key="i">
          <i v-if="n === '|'" class="sep"></i>
          <button v-else class="tool" :class="{ on: pressed.has(n) }" type="button" :aria-label="n"><Icon :n="n" /></button>
        </template>
        <span class="drop named"><select aria-label="Named selection sets"><option>Create Selection Se</option></select></span>
        <template v-for="(n, i) in bar4" :key="i">
          <i v-if="n === '|'" class="sep"></i>
          <button v-else class="tool" :class="{ on: pressed.has(n) }" type="button" :aria-label="n"><Icon :n="n" /></button>
        </template>
        <button class="macro" type="button">PROt</button>
        <button class="tool" type="button" aria-label="TexTools"><Icon n="tex" /></button>
        <button class="tool" type="button" aria-label="Ruler"><Icon n="ruler" /></button>
        <button class="macro wide" type="button">gM_SG</button>
        <button class="macro" type="button">Vtx_Clean</button>
        <button class="macro wide" type="button">Macro2</button>
      </div>
      <div class="toolbar axis">
        <i class="grip"></i>
        <button v-for="n in axes" :key="n" class="tool" :class="{ on: pressed.has(n) }" type="button" :aria-label="n"><Icon :n="n" /></button>
      </div>
    </div>

    <div class="ribbon">
      <i class="grip"></i>
      <div class="ribbon-main">
        <div class="ribbon-tabs">
          <button class="rtab current" type="button">Graphite Modeling Tools</button>
          <button class="rtab" type="button">Freeform</button>
          <button class="rtab" type="button">Selection</button>
          <button class="rtab" type="button">Object Paint</button>
          <button class="mini" type="button" aria-label="Minimize ribbon"><i class="caret dark"></i></button>
          <i class="caret pale"></i>
        </div>
        <div class="ribbon-panel"><button type="button">Polygon Modeling</button></div>
      </div>
    </div>

    <div class="workspace">
      <div class="left">
        <main class="viewport">
          <svg class="scene" viewBox="2 127 1734 946" preserveAspectRatio="xMinYMin meet" aria-hidden="true">
            <g fill="none" stroke="#e4e4e4" stroke-width="1.300">
              <path d="M1291 321l35-8 25 38M1291 327l33-8 27 37M1402 426l25 38-89 22M1402 431l25 38-89 23" />
              <path d="M1291 612l40 60-40 9M1291 627l40 58-40 10" />
              <path d="M330 646l70-19M331 645l42 62M341 641l30 47M400 636l14 24" />
            </g>
            <path d="M1288 330Q1320 329 1340 350 1352 365 1346 379 1338 393 1288 431V402L1312 382Q1326 372 1320 359 1308 346 1288 347z" fill="#f80000" stroke="#b8a850" />
            <path d="M1288 338Q1318 338 1332 356 1340 372 1320 388L1288 416M1288 422l44-36q12-14 4-28" fill="none" stroke="#c80000" />
            <path d="M402 636l11 30v-30z" fill="#f80000" />
            <g fill="none" stroke="#e4e4e4" stroke-width="1.500">
              <path d="M1300 342l9-2 6 9M1328 369l5 8-9 4M1307 404l14-3 3 6M1331 417l4 5-14 4M1291 381l5 6 10-1" />
            </g>
            <ellipse cx="1681" cy="198" rx="33" ry="21" fill="none" stroke="#8a8d92" stroke-width="5" />
            <path d="m1662 164 24-4 13 13 1 20-27 11-10-17z" fill="#85898f" />
            <path d="m1662 164 24-4 13 13-26 8z" fill="#94989e" />
            <g font-family="Liberation Sans, sans-serif" font-size="8" fill="#60646a">
              <text x="1674" y="173">TOP</text><text x="1675" y="194">FRONT</text><text x="1641" y="206">W</text>
            </g>
            <g fill="none" stroke-width="1.500">
              <path d="M28 1048v-20" stroke="#1010d8" /><path d="m28 1048 23-6" stroke="#a01414" /><path d="m28 1048-10-14" stroke="#148014" />
            </g>
            <g font-family="Liberation Sans, sans-serif" font-size="11">
              <text x="27" y="1024" fill="#1414e8">z</text><text x="18" y="1030" fill="#148014">y</text><text x="50" y="1038" fill="#d01010">x</text>
            </g>
          </svg>

          <div class="vp-label">[ + ] [ Orthographic ] [ Smooth + Highlights ]</div>
          <table class="stats">
            <tbody>
              <tr><td></td><td>Total</td><td>22 Objects Selected</td></tr>
              <tr><td>Tris:</td><td>942.773</td><td>26.842</td></tr>
              <tr><td>Verts:</td><td>757.188</td><td>5.940</td></tr>
            </tbody>
          </table>

          <section class="warning">
            <div class="wtitle"><Icon n="swirl" /><span>Warning: Isolated Selection</span>
              <button type="button" aria-label="Close"><svg viewBox="0 0 12 12"><path d="m1 1 10 10M11 1 1 11" /></svg></button>
            </div>
            <div class="wbody"><button type="button">Exit Isolation Mode</button></div>
          </section>

          <section class="uvwin">
            <div class="uvtitle"><Icon n="swirl" /><span>Edit UVWs</span>
              <div class="uvctl">
                <button type="button" aria-label="Minimize"><svg viewBox="0 0 12 12"><path d="M1 6h10" /></svg></button>
                <button type="button" aria-label="Maximize"><svg viewBox="0 0 12 12"><path d="M1 1h10v10H1z" /></svg></button>
                <button type="button" aria-label="Close"><svg viewBox="0 0 12 12"><path d="m1 1 10 10M11 1 1 11" /></svg></button>
              </div>
            </div>
            <nav class="uvmenu">
              <button v-for="m in uvMenu" :key="m" type="button" :class="{ open: m === 'Tools' }">{{ m }}</button>
            </nav>
            <div class="uvstrip">
              <div class="uvstrip-in">
                <button class="tool28" type="button" aria-label="Checker"><Icon class="small" n="checker" /></button>
                <button class="tool28" type="button" aria-label="UV plane"><Icon n="uvt" /></button>
                <button class="tool28" type="button" aria-label="Show options"><Icon class="small" n="listw" /></button>
                <span class="drop checker"><select aria-label="Texture"><option>CheckerPattern&nbsp; ( Checker )</option></select></span>
              </div>
            </div>
            <div class="uvmid">
              <svg class="canvas" viewBox="414 297 715 637" aria-hidden="true">
                <path d="M771.500 297v637M1043.500 297v637M500.500 903v31M414 360.500h715M414 631.500h715M414 903.500h90" stroke="#2f3350" fill="none" />
                <path d="M500.500 360.500h543v543h-543zM1043 903.500h86" fill="none" stroke="#181a28" stroke-width="2.500" />
                <path :d="pit" fill="none" stroke="#ff8400" stroke-width="9" />
                <path :d="pit" fill="none" stroke="#7c6420" stroke-width="5" />
                <path :d="pit" fill="none" stroke="#ff8400" stroke-width="3" />
                <path d="M540 690q5 40 10 62 6 50 16 80" fill="none" stroke="#ff8400" stroke-width="2" />
                <path :d="track" fill="none" stroke="#ff8400" stroke-width="17" stroke-linejoin="round" />
                <path d="M964 533 908 606 804 702 786 704 930 572z" fill="#96701c" />
                <path d="M953 524 768 692 790 704 880 628 930 576 966 533z" fill="#ff8400" />
                <path d="M964 532 905 600 792 701M962 538 902 610 798 702M964 536 908 612" fill="none" stroke="#ff8400" stroke-width="3" />
                <path d="M868 646 804 702M918 590 907 612" fill="none" stroke="#ff8400" stroke-width="2" />
                <path d="M955 538 892 604 794 694" fill="none" stroke="#7c6420" stroke-dasharray="4 1" />
                <path :d="track" fill="none" stroke="url(#mesh)" stroke-width="13" />
                <path d="M940 540 780 688 800 692 900 600z" fill="url(#mesh)" />
                <path d="m958 543 9-11 9 7-11 12z" fill="none" stroke="#a8a030" />
                <path d="m967 539 6 4 3-4-7-5z" fill="#a86a18" />
                <path d="m795 705 9 4-11 21-8-3z" fill="#7c5a18" stroke="#ff8400" stroke-width="1.500" />
                <path d="m739 784 10-3 2-6" fill="none" stroke="#ff8400" stroke-width="2" />
              </svg>

              <aside class="uvside">
                <section class="rollout h84">
                  <h3><i>-</i>Quick Transform</h3>
                  <div class="qt">
                    <Icon n="target" />
                    <div class="qtgrid">
                      <Icon n="alH" /><Icon n="alL" /><Icon n="rotR" /><Icon n="alV" /><Icon n="grayq" /><Icon n="rotL" />
                    </div>
                    <i class="vline"></i>
                    <div class="qtcol"><Icon n="spH" /><Icon n="spV" /></div>
                  </div>
                </section>
                <section class="rollout h54"><h3><i>-</i>Reshape Elements</h3>
                  <div class="irow reshape"><Icon n="straight" /><Icon n="relaxb" /><Icon n="relax" /></div>
                </section>
                <section class="rollout h54"><h3><i>-</i>Stitch</h3>
                  <div class="irow"><Icon n="st1" /><Icon n="st2" /><Icon n="st3" /><Icon n="st4" /></div>
                </section>
                <section class="rollout h102"><h3><i>-</i>Explode</h3>
                  <div class="irow"><Icon n="expBrk" /><Icon n="exp1" /><Icon n="exp2" /><Icon n="exp3" /><Icon n="exp4" /></div>
                  <fieldset class="weld"><legend>Weld</legend>
                    <div class="irow tight"><Icon n="weldT" /><Icon n="weld1" /><Icon n="weld2" /><Icon n="weld3" /></div>
                  </fieldset>
                </section>
                <section class="rollout h102"><h3><i>-</i>Peel</h3>
                  <div class="irow peels"><Icon n="peel1" /><Icon n="peel2" /><Icon n="peel3" /></div>
                  <fieldset class="pins"><legend>Pins:</legend>
                    <div class="irow tight"><Icon n="pin1" /><Icon n="pin2" /><button class="tool28 on" type="button" aria-label="Auto-pin"><Icon n="pin3" /></button><i class="obar"></i><Icon n="pin4" /></div>
                  </fieldset>
                </section>
                <section class="rollout h111"><h3><i>-</i>Arrange Elements</h3>
                  <div class="arrange">
                    <div class="icol"><Icon n="pack1" /><Icon n="pack2" /></div>
                    <div class="abox">
                      <div class="icol"><Icon n="pack3" /><Icon n="pack4" /></div>
                      <div class="aopts">
                        <label class="check"><input v-model="rescale" type="checkbox" />Rescale</label>
                        <label class="check"><input v-model="rotateOn" type="checkbox" />Rotate</label>
                        <span class="pad">Padding:</span>
                        <Spin class="w38" v="0.02" label="Padding" />
                      </div>
                    </div>
                  </div>
                </section>
                <section class="rollout last"><h3><i>-</i>Element Properties</h3>
                  <div class="prio"><span>Rescale Priority:</span><Spin class="w30" v="" label="Rescale Priority" /></div>
                  <fieldset class="groups"><legend>Groups:</legend>
                    <div class="irow tight"><Icon n="grp" /><Icon n="grp" /><Icon n="grpSel" /></div>
                  </fieldset>
                </section>
              </aside>
            </div>

            <div class="uvbar">
              <div class="part grow">
                <template v-for="(n, i) in uvBar" :key="i">
                  <i v-if="n === '|'" class="obar"></i>
                  <button v-else class="tool28" :class="{ on: pressed.has(n) }" type="button" :aria-label="n"><Icon :n="n" /></button>
                </template>
              </div>
              <div class="part split">
                <button class="tool28" type="button" aria-label="Soft selection"><Icon n="falloff" /></button>
                <Spin class="w38" v="0.0" label="Falloff" />
                <button class="tool28" type="button" aria-label="Falloff type"><Icon n="line" /></button>
                <button class="tool28" type="button" aria-label="Falloff space"><Icon n="xy" /></button>
                <i class="obar"></i>
                <button class="tool28 on" type="button" aria-label="Limit by edges"><Icon n="fallEdge" /></button>
                <Spin class="w22" v="16" label="Edge limit" />
              </div>
            </div>
            <div class="uvbar second">
              <div class="part grow">
                <button class="tool28" type="button" aria-label="Absolute toggle"><Icon n="abs" /></button>
                <i class="obar blue"></i>
                <span class="lab first">U:</span><Spin class="w30" v="0.0" label="U" />
                <span class="lab">V:</span><Spin class="w30" v="0.0" label="V" />
                <span class="lab">W:</span><Spin class="w30" v="0.0" label="W" />
                <i class="obar blue wide"></i>
              </div>
              <div class="part split">
                <button class="tool28" type="button" aria-label="Lock"><Icon n="lock" /></button>
                <button class="tool28" type="button" aria-label="Filter"><Icon n="hideF" /></button>
                <i class="obar"></i>
                <button class="tool28" type="button" aria-label="Hide"><Icon n="bulb2" /></button>
                <button class="tool28" type="button" aria-label="Freeze"><Icon n="snow" /></button>
                <i class="obar"></i>
                <span class="drop ids"><select aria-label="Material IDs"><option>All IDs</option></select></span>
                <button class="tool28" type="button" aria-label="Pan"><Icon n="hand" /></button>
                <button class="tool28" type="button" aria-label="Zoom"><Icon n="zoom" /></button>
                <button class="tool28" type="button" aria-label="Zoom region"><Icon n="zoomR" /></button>
                <button class="tool28" type="button" aria-label="Zoom extents"><Icon n="fit" /></button>
                <button class="tool28" type="button" aria-label="Grid snap"><Icon n="gridSnap" /></button>
              </div>
            </div>
          </section>

          <div class="popup" role="menu">
            <div v-for="(g, gi) in toolsMenu" :key="gi" class="pgroup">
              <button v-for="it in g" :key="it.t" type="button" role="menuitem" :class="{ hot: gi === toolsMenu.length - 1 }">
                <span>{{ it.t }}</span><span>{{ it.k }}</span>
              </button>
            </div>
          </div>
        </main>

        <div class="slider">
          <button type="button">&lt;</button><span class="thumb">0 / 259</span><button type="button">&gt;</button>
        </div>
        <div class="trackbar">
          <Icon n="track" />
          <div class="ruler">
            <span v-for="f in frames" :key="f" class="fr" :class="{ major: f % 10 === 0, now: f === 0 }"><b v-if="f % 10 === 0">{{ f }}</b></span>
          </div>
        </div>
      </div>

      <aside class="command">
        <div class="ctabs">
          <button v-for="t in tabs" :key="t" type="button" :class="{ cur: t === 'modify' }" :aria-label="t"><Icon :n="t" /></button>
        </div>
        <div class="nameRow">
          <input type="text" value="22 Objects Selected" aria-label="Object name" /><button type="button" aria-label="Object color"></button>
        </div>
        <span class="drop modlist"><select aria-label="Modifier List"><option>Modifier List</option></select></span>
        <div class="stack">
          <div class="srow sel"><Icon class="s14" n="bulb" /><Icon class="s12" n="plusbox" /><span>Unwrap UVW</span><Icon class="s14" n="cubeMini" /></div>
          <div class="srow"><Icon class="s14" n="bulb" /><Icon class="s12" n="plusdim" /><span>Edit Poly</span><Icon class="s14" n="cubeMini" /></div>
        </div>
        <div class="stackbar">
          <Icon class="s16" n="pinstack" /><i></i><Icon class="s16" n="tube" /><i></i><Icon class="s16" n="unique" /><Icon class="s16" n="bin" /><i></i><Icon class="s16" n="config" />
        </div>
        <div class="rolls">
          <div class="rolllist">
            <section class="rollout open-top">
              <fieldset class="fs modsel"><legend>Modify Selection:</legend>
                <div class="msrow"><Icon n="selPlus" /><Icon n="selMinus" /><Icon class="push" n="dashG" /><Icon n="barsG" /></div>
              </fieldset>
              <fieldset class="fs selby"><legend>Select By:</legend>
                <div class="sbrow">
                  <button class="tool28 on" type="button" aria-label="Ignore backfacing"><Icon n="cubeW" /></button><Icon n="dotL" />
                  <button class="tool28 on push" type="button" aria-label="By planar angle"><Icon n="arc" /></button><Spin class="w28" v="0.0" label="Planar angle" />
                </div>
                <div class="sbrow">
                  <Icon class="inset" n="sphere" /><Spin class="w28" v="0" label="Material ID" />
                  <Icon class="push" n="grid" /><Spin class="w28" v="0" label="Smoothing group" />
                </div>
              </fieldset>
              <div class="peek"><span>0.0</span></div>
            </section>
            <section class="rollout cmd"><h3><i>-</i>Edit UVs</h3>
              <div class="editbtns"><button class="btn" type="button">Open UV Editor ...</button><button class="btn" type="button">Tweak In View</button></div>
              <div class="irow planes"><Icon n="plane1" /><button class="tool28 on" type="button" aria-label="Planar"><Icon n="plane2" /></button><Icon n="xbox" /></div>
            </section>
            <section class="rollout cmd"><h3><i>-</i>Channel</h3>
              <div class="chanbtns"><button class="btn" type="button">Reset UVWs</button><button class="btn" type="button">Save...</button><button class="btn load" type="button">Load...</button></div>
              <fieldset class="fs chan"><legend>Channel:</legend>
                <div class="rrow"><label class="radio"><input v-model="channel" type="radio" name="ch" value="map" />Map Channel:</label><Spin class="w32" v="5" label="Map Channel" /></div>
                <div class="rrow"><label class="radio"><input v-model="channel" type="radio" name="ch" value="vc" />Vertex Color Channel</label></div>
              </fieldset>
            </section>
            <section class="rollout cmd"><h3><i>-</i>Peel</h3>
              <div class="irow peel"><Icon n="peel1" /><Icon n="peel2" /><Icon n="peel3" /><Icon n="pelt" /></div>
              <fieldset class="fs seams"><legend>Seams:</legend>
                <div class="irow tight"><Icon n="seam1" /><Icon n="seam2" /><Icon n="seam3" /><Icon n="seam4" /></div>
              </fieldset>
            </section>
          </div>
          <div class="scroll"><i></i></div>
        </div>
      </aside>
    </div>

    <footer class="status">
      <div class="listener"><input class="pink" type="text" value="" aria-label="Macro recorder" /><input type="text" value="Max to Physcs Geometr" aria-label="Listener" /></div>
      <div class="prompt">
        <div class="prow coords">
          <output class="sunk">22 Objects Selected</output>
          <Icon class="s16" n="lockS" /><Icon class="s18" n="abs" />
          <label for="cx">X:</label><input id="cx" type="text" value="-190.558m" />
          <label for="cy">Y:</label><input id="cy" type="text" value="127.154m" />
          <label for="cz">Z:</label><input id="cz" type="text" value="0.0m" />
        </div>
        <div class="prow"><output class="sunk">Select faces</output><Icon class="s18" n="boxIso" /></div>
      </div>
      <div class="gridcol"><span class="sunk">Grid = 10.0m</span><span class="sunk">Add Time Tag</span></div>
      <button class="btn keybig" type="button" aria-label="Set keys"><Icon n="keyBig" /></button>
      <div class="keycol"><button class="btn" type="button">Auto Key</button><button class="btn" type="button">Set Key</button></div>
      <div class="filtercol">
        <span class="drop"><select aria-label="Key set"><option>Selected</option></select></span>
        <div class="frow"><Icon class="s20" n="curveK" /><button class="btn" type="button">Key Filters...</button></div>
      </div>
      <div class="playcol">
        <div class="plrow keys"><Icon class="s18" n="first" /><i></i><Icon class="s18" n="prev" /><Icon class="s18" n="play" /><Icon class="s18" n="next" /><i></i><Icon class="s18" n="last" /></div>
        <div class="plrow"><Icon class="s18" n="keymode" /><i></i><Spin class="w64" v="0" label="Current frame" /><Icon class="s18" n="timecfg" /></div>
      </div>
      <div class="navgrid">
        <Icon class="s18" n="zoom" /><Icon class="s18" n="zAll" /><Icon class="s18" n="ext" /><Icon class="s18" n="extAll" />
        <Icon class="s18" n="zReg" /><Icon class="s18" n="hand" /><Icon class="s18" n="orbit" /><Icon class="s18" n="maxv" />
      </div>
    </footer>
  </div>
</template>

<style>
html, body { background: #444; }
#app button, #app input, #app select { font: inherit; color: inherit; box-sizing: border-box; }
#app button { background: none; border: 0; padding: 0; margin: 0; }
</style>

<style scoped>
.app { display: flex; flex-direction: column; min-height: 100vh; background: #444; color: #ccc; font: 11px/14px "Open Sans", "Noto Sans", sans-serif; overflow: hidden; }
.app * { box-sizing: border-box; }
.defs { position: absolute; width: 0; height: 0; }
.app :deep(.ic), .ic { width: 24px; height: 24px; flex: none; display: block; overflow: visible; }
.ic.small, .ic.s16 { width: 16px; height: 16px; }
.ic.s12 { width: 12px; height: 12px; }
.ic.s14 { width: 14px; height: 14px; }
.ic.s18 { width: 18px; height: 18px; }
.ic.s20 { width: 20px; height: 20px; }

/* title bar */
.titlebar { display: flex; height: 24px; background: #fff; position: relative; }
#app .logo { position: absolute; left: 0; top: 0; width: 40px; height: 41px; z-index: 2; border: 1px solid #063c3c; }
.logo svg { display: block; width: 100%; height: 100%; }
.quick { display: flex; align-items: center; margin-left: 40px; width: 190px; padding-left: 6px; background: linear-gradient(#b4b4b4, #8a8a8a); border: 1px solid #777; border-top-color: #999; }
.quick button { width: 24px; display: flex; justify-content: center; }
.quick .ic, .helpbox .ic { width: 18px; height: 18px; }
.caret { width: 12px; display: flex; justify-content: center; }
.caret::before { content: ''; border: 3px solid transparent; border-top: 4px solid #555; border-bottom: 0; }
.caret.dark::before { border-top-color: #111; }
.caret.pale::before { border-top-color: #aaa; }
.helpbox { display: flex; align-items: center; width: 338px; margin-left: auto; background: linear-gradient(#b4b4b4, #8a8a8a); border: 1px solid #777; }
.helpbox button { width: 24px; display: flex; justify-content: center; }
.helpbox .play { width: 12px; display: flex; justify-content: center; }
.helpbox .play::before { content: ''; border: 4px solid transparent; border-left: 5px solid #111; border-right: 0; }
#app .helpbox input { width: 180px; height: 20px; border: 1px solid #ccc; background: #f4f4f4; font-style: italic; font-size: 11px; padding: 2px 2px 0; }
#app .helpbox input::placeholder { color: #666; opacity: 1; }
.helpbox .bar { width: 1px; height: 18px; background: #777; margin: 0 5px; }
.wincontrols { display: flex; margin: 0 3px 0 24px; }
.wincontrols button { width: 45px; display: grid; place-items: center; }
.wincontrols svg, .uvctl svg, .wtitle button svg { width: 12px; height: 12px; fill: none; stroke: #000; }

.menubar { display: flex; height: 21px; padding-left: 43px; background: linear-gradient(#a8a8a8, #505050); border-top: 1px solid #333; color: #fff; font: 12px/14px Roboto, "Open Sans", sans-serif; }

/* main toolbar */
.toolrow { display: flex; height: 39px; border-top: 1px solid #333; border-bottom: 2px solid #1a1a1a; }
.toolbar { display: flex; align-items: center; flex: 1; min-width: 0; }
.toolbar.axis { flex: none; width: 182px; border-left: 1px solid #111; }
.grip { width: 8px; align-self: stretch; margin: 2px 0; background: linear-gradient(90deg, transparent 3px, #111 3px 4px, transparent 4px 6px, #111 6px 7px, transparent 7px); }
.tool { width: 32px; height: 32px; display: grid; place-items: center; flex: none; }
#app .on { background: #3c82dc; border: 1px solid #111; }
.sep { width: 6px; height: 20px; flex: none; background: linear-gradient(90deg, transparent 3px, #111 3px 4px, transparent 4px); }
.macro { width: 68px; flex: none; color: #ccc; }
.macro.wide { width: 72px; }
.drop { position: relative; display: inline-flex; flex: none; height: 21px; border: 2px solid #151515; border-bottom: 1px solid #333; border-right: 1px solid #333; background: #e1e1e1; color: #000; align-self: center; }
#app .drop select { appearance: none; width: 100%; border: 0; background: none; padding: 0 16px 0 3px; outline: 0; font-size: 11px; }
.drop::after { content: ''; position: absolute; right: 6px; top: 50%; width: 5px; height: 5px; border: solid #444; border-width: 0 1px 1px 0; transform: translateY(-4px) rotate(45deg); pointer-events: none; }
.toolbar .drop { margin-bottom: 8px; }
.w70 { width: 70px; }
.named { width: 120px; background: linear-gradient(90deg, #505050 98px, #fff 98px); outline: 1px solid #fff; outline-offset: -3px; color: #111; }
#app .named select { padding-right: 0; }

/* ribbon */
.ribbon { display: flex; height: 41px; background: #444; }
.ribbon-main { flex: 1; border-left: 1px solid #222; margin-left: 1px; }
.ribbon-tabs { display: flex; height: 21px; align-items: center; background: #515151; border-bottom: 1px solid #2a2a2a; border-top: 1px solid #5e5e5e; font: 12px/14px Roboto, "Open Sans", sans-serif; padding-left: 4px; color: #a4a4a4; }
.rtab { height: 19px; }
#app .rtab { padding: 0 22px; }
#app .rtab.current { width: 172px; padding: 0; color: #ddd; background: linear-gradient(#5e5e5e, #4a4a4a); border: 1px solid #333; border-bottom: 0; border-radius: 3px 3px 0 0; }
#app .mini { width: 14px; height: 9px; border-radius: 2px; background: #e8e8e8; margin: 0 2px 0 22px; display: grid; place-items: center; }
.ribbon-panel { height: 20px; background: linear-gradient(#494949, #3b3b3b); border-bottom: 2px solid #2c2c2c; font: 12px/14px Roboto, "Open Sans", sans-serif; display: flex; }
#app .ribbon-panel button { width: 110px; height: 18px; border: 1px solid #555; border-top: 0; color: #e4e4e4; background: #444; }

/* workspace */
.workspace { display: flex; flex: 1; min-height: 995px; }
.left { display: flex; flex-direction: column; flex: 1; min-width: 0; }
.viewport { position: relative; flex: 1; border: 2px solid #7b6a2c; background: #383838; overflow: hidden; margin-right: 1px; }
.scene { position: absolute; left: 0; top: 0; width: 1734px; height: 946px; }
.vp-label { position: absolute; left: 5px; top: 3px; color: #c4c4c4; font: 11px/14px "Liberation Sans", Arial, sans-serif; }
.stats { position: absolute; left: 13px; top: 32px; color: #e8ce1c; border-collapse: collapse; font: 11px/16px "Liberation Sans", Arial, sans-serif; }
.stats td { padding: 0; }
.stats td:nth-child(1) { width: 41px; }
.stats td:nth-child(2) { width: 55px; }

.warning { position: absolute; left: 252px; top: 12px; width: 200px; background: #444; }
.wtitle { display: flex; align-items: center; height: 25px; padding-left: 3px; background: #fff; color: #8c8c8c; font: 12px/14px Roboto, "Open Sans", sans-serif; gap: 5px; white-space: nowrap; }
.wtitle .ic, .uvtitle .ic { width: 16px; height: 16px; }
.wtitle button { margin-left: auto !important; width: 30px; display: grid; place-items: center; }
#app .wtitle button svg { stroke: #777; width: 10px; }
.wbody { padding: 8px; }
#app .wbody button { display: block; width: 100%; height: 32px; background: #3c82dc; border: 2px solid #151515; border-width: 2px 1px 1px 2px; color: #cfdff2; }

.uvwin { position: absolute; left: 410px; top: 89px; width: 880px; background: #444; border: 1px solid #666; }
.uvtitle { display: flex; align-items: center; height: 30px; padding: 0 0 2px 8px; gap: 5px; background: #fff; color: #111; font: 12px/14px Roboto, "Open Sans", sans-serif; }
.uvctl { display: flex; margin-left: auto; }
.uvctl button { width: 46px; height: 26px; display: grid; place-items: center; }
.uvmenu { display: flex; height: 20px; background: #fff; color: #000; font: 12px/14px Roboto, "Open Sans", sans-serif; }
#app .uvmenu button { padding: 0 7px; border: 1px solid transparent; border-width: 1px 0; }
#app .uvmenu button.open { background: #cce8ff; border: 1px solid #99d1ff; padding: 0 6px; }
.uvstrip { display: flex; justify-content: flex-end; height: 30px; border-bottom: 1px solid #666; border-top: 1px solid #777; }
.uvstrip-in { display: flex; align-items: center; width: 269px; padding-right: 15px; justify-content: flex-end; border-left: 1px solid #222; }
.tool28 { width: 28px; height: 28px; display: grid; place-items: center; flex: none; }
.drop.checker { width: 170px; }
.uvmid { display: flex; height: 637px; background: #444; }
.canvas { flex: 1; min-width: 0; height: 637px; background: #515151; border-left: 1px solid #000; }
.uvside { width: 162px; height: 634px; overflow: hidden; border-left: 1px solid #0c0c0c; padding: 5px 2px 0; display: flex; flex-direction: column; gap: 7px; border-bottom: 1px solid #222; }

.rollout { position: relative; flex: none; }
.rollout::before { content: ''; position: absolute; inset: 8px 0 0 0; border: 1px solid #141414; border-top: 0; pointer-events: none; }
.rollout h3 { position: relative; margin: 0 4px; height: 16px; border: 1px solid #686868; font: inherit; line-height: 14px; color: #e4e4e4; text-align: center; background: #434343; }
.rollout h3 i { position: absolute; left: 3px; font-style: normal; }
.h84 { height: 84px; }
.h54 { height: 54px; }
.h102 { height: 102px; }
.h111 { height: 111px; }
.rollout.last { height: 90px; }
.irow { display: flex; justify-content: center; gap: 4px; padding-top: 6px; }
.irow.tight { padding-top: 2px; align-items: center; }
.irow.reshape, .irow.peels { padding-left: 6px; }
.qt { display: flex; align-items: center; padding: 2px 6px 0; gap: 5px; }
.qtgrid { display: grid; grid-template-columns: repeat(3, 24px); gap: 7px 4px; }
.qtcol { display: grid; gap: 7px; }
.vline { width: 1px; height: 58px; background: #777; }
fieldset { position: relative; margin: 2px 5px 0 7px; padding: 0; min-width: 0; border: 1px solid #111; }
legend { margin-left: 6px; padding: 0 3px; line-height: 14px; color: #bbb; }
.weld, .pins { height: 49px; }
.weld .irow { padding-top: 4px; padding-right: 9px; }
.pins { margin: 2px 11px 0 12px; }
.pins .tool28 { width: 26px; height: 26px; }
.pins .obar { width: 6px; background: linear-gradient(90deg, transparent 2px, #8c7450 2px 4px, transparent 4px); }
.arrange { display: flex; padding: 6px 6px 0 9px; gap: 11px; }
.icol { display: flex; flex-direction: column; gap: 9px; padding-top: 14px; }
.abox { flex: 1; display: flex; height: 85px; border: 1px solid #111; gap: 9px; padding-left: 4px; }
.abox .icol { padding-top: 13px; }
.aopts { display: flex; flex-direction: column; padding-top: 5px; }
.check { display: flex; align-items: center; gap: 8px; height: 21px; }
#app .check input { appearance: none; width: 12px; height: 12px; margin: 0; border: 2px solid #111; border-width: 2px 1px 1px 2px; background: #444; display: grid; place-items: center; }
#app .check input:checked::after { content: ''; width: 3px; height: 6px; border: solid #eee; border-width: 0 2px 2px 0; transform: translateY(-1px) rotate(40deg); }
.pad { height: 17px; line-height: 14px; }
.prio { display: flex; align-items: center; gap: 2px; padding: 2px 0 0 9px; height: 26px; white-space: nowrap; }
.groups { height: 60px; margin: 5px 15px 0 7px; }
.groups .irow { padding: 4px 10px 0 0; }

/* number fields */
.spin { display: inline-flex; height: 16px; flex: none; }
.spin :deep(input) { height: 16px; width: 30px; border: 2px solid #151515; border-width: 2px 1px 1px 2px; background: #555; padding: 0 2px; outline: 0; line-height: 12px; }
.w22 :deep(input) { width: 22px; }
.w28 :deep(input) { width: 28px; }
.w32 :deep(input) { width: 33px; }
.w38 :deep(input) { width: 38px; }
.w64 :deep(input) { width: 64px; }
.spin :deep(.arrows) { display: flex; flex-direction: column; width: 12px; }
.spin :deep(button) { flex: 1; display: grid; place-items: center; border: 1px solid #1c1c1c !important; border-width: 0 1px 1px 0 !important; }
.spin :deep(button)::before { content: ''; border: 3px solid transparent; }
.spin :deep(.up)::before { border-bottom: 4px solid #bbb; border-top: 0; }
.spin :deep(.down)::before { border-top: 4px solid #bbb; border-bottom: 0; }

.uvbar { display: flex; height: 30px; border-top: 1px solid #666; border-bottom: 1px solid #5a5a5a; }
.uvbar.second { height: 30px; border-top: 0; margin-bottom: 1px; }
.part { display: flex; align-items: center; padding-top: 1px; }
.part .spin { margin: 0 4px 6px; }
.part .drop { margin-bottom: 5px; }
.grow { flex: 1; }
.split { border-left: 2px solid #5e5e5e; padding-right: 4px; }
.obar { width: 10px; height: 14px; align-self: center; margin-bottom: 5px; background: linear-gradient(90deg, transparent 4px, #b48a58 4px 6px, transparent 6px); }
.obar.blue { background: linear-gradient(90deg, transparent 4px, #5c8ebc 4px 6px, transparent 6px); }
.part.grow .spin { margin-left: 0; margin-right: 0; }
.lab { width: 24px; text-align: center; margin-bottom: 6px; }
.lab.first { width: 18px; }
.obar.wide { margin-left: 6px; }
.ids { width: 140px; }

.popup { position: absolute; left: 254px; top: 139px; width: 310px; padding: 2px; background: #f2f2f2; border: 1px solid #ccc; color: #000; font: 12px/14px Roboto, "Open Sans", sans-serif; }
.pgroup + .pgroup { position: relative; padding-top: 7px; }
.pgroup + .pgroup::before { content: ''; position: absolute; left: 28px; right: 0; top: 3px; height: 1px; background: #d4d4d4; }
#app .popup button { display: flex; justify-content: space-between; align-items: center; width: 100%; height: 22px; padding: 0 18px 0 32px; }
#app .popup button.hot { background: #91c9f7; }

/* time slider and track bar */
.slider { display: flex; height: 19px; }
#app .slider button { width: 16px; height: 17px; border: 1px solid #111; border-width: 0 1px 1px 0; }
.thumb { width: 125px; height: 17px; margin-right: 1px; text-align: center; line-height: 16px; border: 1px solid #111; border-width: 0 1px 2px 1px; }
.trackbar { display: flex; height: 26px; border-top: 1px solid #111; margin-right: 1px; }
.trackbar .ic { width: 20px; height: 20px; margin: 2px 18px 0 12px; }
.ruler { display: flex; flex: 1; margin-right: 50px; background: #292929; }
.fr { flex: 1 1 0; min-width: 0; display: flex; flex-direction: column; align-items: center; }
.fr::before { content: ''; width: 1px; height: 12px; background: #6c6c6c; flex: none; }
.fr b { font-weight: 400; line-height: 12px; white-space: nowrap; }
.fr.now { background: #857a1c; }
.fr.now b { color: #e8e070; }

/* command panel */
.command { width: 183px; display: flex; flex-direction: column; padding-left: 3px; border-bottom: 1px solid #111; }
.ctabs { display: flex; height: 27px; border-bottom: 1px solid #2a2a2a; }
#app .ctabs button { width: 29px; display: grid; place-items: center; border-right: 2px solid #1a1a1a; border-top: 1px solid #333; border-radius: 2px 2px 0 0; }
.ctabs .ic { width: 20px; height: 20px; }
#app .ctabs button.cur { background: #4c4c4c; }
.nameRow { display: flex; gap: 4px; margin: 5px 0 0 7px; }
#app .nameRow input { width: 146px; height: 20px; border: 2px solid #151515; border-width: 2px 1px 1px 2px; background: #555; color: #111; padding: 0 2px; }
#app .nameRow button { width: 17px; height: 20px; background: #806a0e; border: 1px solid #222; }
.modlist { width: 165px; height: 23px; margin: 6px 0 0 7px; align-self: flex-start; background: linear-gradient(90deg, #505050 144px, #fff 144px); color: #ccc; }
.stack { height: 294px; width: 162px; margin: 5px 0 0 7px; border: 2px solid #fff; outline: 1px solid #9a9fa8; outline-offset: -1px; background: #555; }
.srow { display: flex; align-items: center; height: 16px; padding: 0 6px; gap: 5px; border-bottom: 1px solid #777; color: #e0e0e0; font-size: 12px; font-weight: 700; font-style: italic; }
.srow span { flex: 1; }
.srow.sel { background: #3c82dc; }
.stackbar { display: flex; align-items: center; justify-content: space-between; height: 39px; margin: 0 20px 0 11px; padding-bottom: 8px; }
.stackbar i { width: 1px; height: 16px; background: #111; }
.rolls { display: flex; margin: 0 7px 5px 0; border-top: 2px solid #111; padding-top: 7px; min-height: 0; }
.rolllist { flex: 1; min-width: 0; height: 560px; overflow: hidden; display: flex; flex-direction: column; gap: 8px; padding: 0 2px; }
.scroll { width: 5px; height: 560px; background: #c8c8c8; padding-top: 33px; }
.scroll i { display: block; height: 296px; background: #0c0c0c; }
.open-top { height: 140px; }
.open-top::before { top: 0; }
.fs { margin: 0 6px 0 7px; }
.modsel { margin-top: -5px; height: 54px; }
.msrow { display: flex; padding: 5px 4px 0 7px; gap: 4px; }
.push { margin-left: auto !important; }
.selby { height: 86px; margin-top: 1px; }
.sbrow { display: flex; align-items: center; padding: 3px 8px 0 2px; gap: 2px; }
.sbrow .inset { margin-left: 3px; }
.sbrow .spin { margin-left: 1px; }
.peek { position: absolute; right: 28px; bottom: -7px; width: 24px; height: 5px; overflow: hidden; background: #4e4e4e; }
.peek span { display: block; margin-top: -8px; padding-left: 1px; }
.cmd { height: 135px; }
.cmd:nth-child(3) { height: 149px; }
.cmd:nth-child(4) { height: 130px; }
.editbtns { display: flex; flex-direction: column; gap: 5px; padding: 5px 10px 0 13px; }
#app .btn { background: #444; border: 1px solid #393939; border-right-color: #111; border-bottom-color: #111; color: #ccc; text-align: center; }
.editbtns .btn { height: 26px; }
.planes { padding-top: 10px; align-items: center; padding-left: 4px; }
.chanbtns { display: grid; grid-template-columns: 74px 74px; gap: 2px; padding: 3px 0 0 7px; }
.chanbtns .btn { height: 23px; }
.load { grid-column: 2; }
.chan { height: 68px; margin-right: 8px; }
.rrow { display: flex; align-items: center; justify-content: space-between; height: 22px; padding: 2px 8px 0 6px; }
.radio { display: flex; align-items: center; gap: 6px; white-space: nowrap; }
#app .radio input { appearance: none; width: 10px; height: 10px; margin: 0; border-radius: 50%; border: 2px solid #161616; background: #444; }
#app .radio input:checked { background: #ddd; }
.irow.peel { padding: 9px 0 0 4px; }
.seams { height: 52px; margin-top: 6px; }

/* status bar */
.status { display: flex; height: 50px; padding-top: 2px; }
.listener { width: 166px; margin-right: 3px; border-right: 1px solid #111; display: flex; flex-direction: column; gap: 1px; }
#app .listener input { width: 160px; height: 23px; border: 2px solid #f4f4f4; border-top-color: #888; border-left-color: #999; background: #fff; color: #000; font: 12px/18px "Liberation Mono", monospace; padding: 0 3px; }
#app .listener input.pink { background: #dcc2c4; }
.prompt { flex: 1; display: flex; flex-direction: column; gap: 4px; min-width: 0; padding-top: 2px; }
.prow { display: flex; align-items: center; }
.prow.coords { padding-right: 9px; }
.sunk { border: 1px solid #111; border-right-color: #383838; border-bottom-color: #383838; height: 21px; line-height: 19px; padding: 0 5px; }
.prow .sunk { flex: 1; }
.prow .s16 { margin: 0 5px; }
.prow .s18 { margin: 0 0 0 5px; }
.prow label { width: 24px; text-align: right; padding-right: 3px; }
.prow .s18 + label { width: 18px; }
#app .prow input { width: 58px; height: 20px; border: 2px solid #151515; border-width: 2px 1px 1px 2px; background: #555; color: #151515; padding: 0 1px; }
.gridcol { width: 100px; display: flex; flex-direction: column; gap: 4px; padding-top: 2px; margin: 0 3px 0 5px; }
#app .keybig { width: 44px; height: 46px; display: grid; place-items: center; margin-right: 4px; }
.keycol { width: 47px; display: flex; flex-direction: column; gap: 1px; padding-top: 1px; margin-right: 3px; white-space: nowrap; }
.keycol .btn { height: 22px; }
.filtercol { width: 116px; display: flex; flex-direction: column; gap: 2px; padding-top: 1px; margin-right: 7px; }
.filtercol .drop { width: 116px; align-self: flex-start; }
.frow { display: flex; gap: 6px; }
.frow .btn { flex: 1; height: 21px; font-size: 12px; }
.playcol { width: 123px; display: flex; flex-direction: column; gap: 3px; padding-top: 2px; margin-right: 3px; }
.plrow { display: flex; align-items: center; justify-content: space-between; height: 20px; }
.plrow.keys { padding-right: 7px; }
.plrow i { width: 1px; height: 16px; background: #111; }
.navgrid { display: grid; grid-template-columns: repeat(4, 18px); gap: 4px 5px; align-content: start; padding: 2px 6px 0 0; }
</style>
